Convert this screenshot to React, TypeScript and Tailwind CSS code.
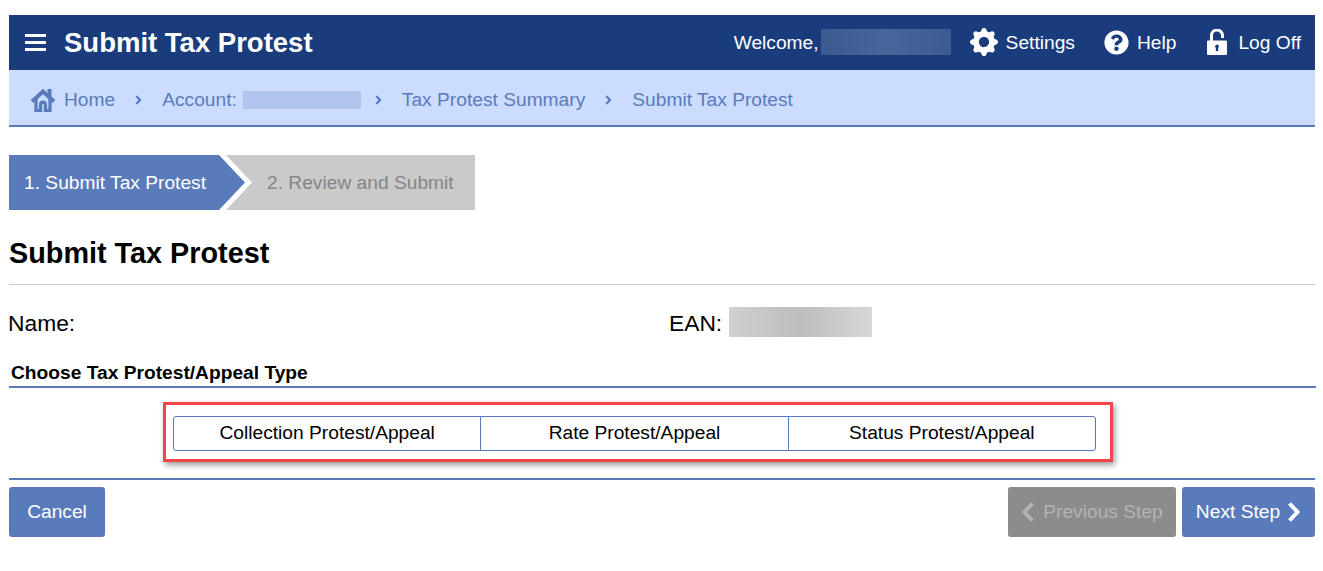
import { FaQuestionCircle, FaAngleRight } from "react-icons/fa";
import { BsGearFill } from "react-icons/bs";

function HomeIcon() {
  return (
    <svg viewBox="0 0 24 24" className="h-[24px] w-[24px] text-[#5a7bbb]" fill="none" stroke="currentColor">
      <path d="M1 13.5 L12 3.5 L23 13.5" strokeWidth="4" />
      <path d="M18.5 1 V9" strokeWidth="4" />
      <path d="M5 11 V22.5 H9.6 V16.5 A2.4 2.4 0 0 1 14.4 16.5 V22.5 H19 V11" strokeWidth="3.2" />
    </svg>
  );
}

function OpenLock() {
  return (
    <svg viewBox="0 0 20 26" className="h-[26px] w-[20px] text-white">
      <path d="M4.5 12 V6.5 A5.5 5.5 0 0 1 15.5 6.5 V9" fill="none" stroke="currentColor" strokeWidth="3" />
      <path fillRule="evenodd" fill="currentColor" d="M1 11.5 H19 A1 1 0 0 1 20 12.5 V25 A1 1 0 0 1 19 26 H1 A1 1 0 0 1 0 25 V12.5 A1 1 0 0 1 1 11.5 Z M10 15.5 A2 2 0 0 0 8.8 19 V22 H11.2 V19 A2 2 0 0 0 10 15.5 Z" />
    </svg>
  );
}

function Chevron({ left }: { left?: boolean }) {
  return (
    <svg viewBox="0 0 14 20" className="h-[20px] w-[14px]" fill="none" stroke="currentColor" strokeWidth="4">
      <path d={left ? "M11.5 1.5 L3.5 10 L11.5 18.5" : "M2.5 1.5 L10.5 10 L2.5 18.5"} />
    </svg>
  );
}

function Sep() {
  return <FaAngleRight className="mx-[19px] h-[14px] w-[9px] text-[#5a7bbb]" />;
}

export default function App() {
  return (
    <div className="min-h-[571px] bg-white pt-[15px] pl-[9px] pr-[8px] font-['Liberation_Sans',Arial,sans-serif]">
      <header className="flex h-[55px] items-center bg-[#1a3c7c] text-white">
        <div className="ml-[16px] flex w-[21px] flex-col gap-[4px]">
          <span className="h-[3px] bg-white" />
          <span className="h-[3px] bg-white" />
          <span className="h-[3px] bg-white" />
        </div>
        <h1 className="ml-[18px] mt-[1px] text-[27.5px] font-bold leading-none">Submit Tax Protest</h1>
        <div className="ml-auto flex items-center text-[19.2px]">
          <span className="pt-[1px]">Welcome,</span>
          <span className="ml-[2px] h-[26px] w-[130px] bg-linear-to-r from-[#3a5a90] via-[#47669a] to-[#3c5c91]" />
          <BsGearFill className="ml-[19px] h-[28px] w-[28px]" />
          <span className="ml-[8px] pt-[1px]">Settings</span>
          <FaQuestionCircle className="ml-[29px] h-[25px] w-[25px]" />
          <span className="ml-[8px] pt-[1px]">Help</span>
          <div className="ml-[31px]"><OpenLock /></div>
          <span className="ml-[11px] mr-[14px] pt-[1px]">Log Off</span>
        </div>
      </header>

      <nav className="flex h-[57px] items-center border-b-2 border-[#5a7bbb] bg-[#cbdcff] pl-[22px] pt-[5px] text-[19.2px] text-[#5a7bbb]">
        <HomeIcon />
        <span className="ml-[9px]">Home</span>
        <Sep />
        <span>Account:</span>
        <span className="ml-[6px] -mr-[6px] h-[18px] w-[118px] bg-[#b0c6ee]" />
        <Sep />
        <span>Tax Protest Summary</span>
        <Sep />
        <span>Submit Tax Protest</span>
      </nav>

      <div className="mt-[28px] flex h-[55px] w-[466px] bg-[#cacaca]">
        <div className="relative h-full w-[245px] bg-white [clip-path:polygon(0_0,217px_0,243px_50%,217px_100%,0_100%)]">
          <div className="flex h-full w-[245px] items-center bg-[#5a7bbb] pl-[15px] pt-[1px] text-[19.2px] text-white [clip-path:polygon(0_0,210px_0,236px_50%,210px_100%,0_100%)]">
            1. Submit Tax Protest
          </div>
        </div>
        <div className="ml-[13px] flex items-center pt-[1px] text-[19.2px] text-[#858585]">2. Review and Submit</div>
      </div>

      <h2 className="mt-[26px] text-[28.8px] font-bold leading-[34px] text-black">Submit Tax Protest</h2>
      <hr className="mt-[14px] border-t border-[#cccccc]" />

      <div className="mt-[22px] flex h-[32px] items-center pt-[1px] text-[22.8px] text-black">
        <span className="-ml-[1px] w-[661px]">Name:</span>
        <span>EAN:</span>
        <span className="ml-[7px] -mt-[3px] h-[30px] w-[143px] bg-linear-to-r from-[#d0d0d0] via-[#bdbdbd] to-[#d8d8d8]" />
      </div>

      <div className="mt-[21px] -mr-[1px] border-b-2 border-[#5a7bbb] pt-[1px] pb-[1px] pl-[2px] text-[19.2px] font-bold leading-[24px] text-black">
        Choose Tax Protest/Appeal Type
      </div>

      <div className="pt-[14px] pb-[16px] pl-[154px]">
        <div className="w-[950px] border-[3px] border-[#f4434a] pt-[11px] pr-[14px] pb-[8px] pl-[7px] shadow-[2px_3px_6px_rgba(0,0,0,0.4)]">
          <div className="flex h-[35px] w-[923px] rounded-[3px] border border-[#5a7bbb] text-[19.2px] text-black">
            <div className="flex flex-1 items-center justify-center border-r border-[#5a7bbb]">Collection Protest/Appeal</div>
            <div className="flex flex-1 items-center justify-center border-r border-[#5a7bbb]">Rate Protest/Appeal</div>
            <div className="flex flex-1 items-center justify-center">Status Protest/Appeal</div>
          </div>
        </div>
      </div>

      <div className="flex border-t-2 border-[#5a7bbb] pt-[7px] text-[19.2px]">
        <button className="h-[50px] w-[96px] rounded-[3px] bg-[#5a7bbb] text-white">Cancel</button>
        <button className="ml-auto flex h-[50px] w-[168px] items-center justify-center gap-[8px] rounded-[3px] bg-[#8c8c8c] text-[#b3b3b3]">
          <Chevron left />
          Previous Step
        </button>
        <button className="ml-[6px] flex h-[50px] w-[133px] items-center justify-center gap-[7px] rounded-[3px] bg-[#5a7bbb] text-white">
          Next Step
          <Chevron />
        </button>
      </div>
    </div>
  );
}
